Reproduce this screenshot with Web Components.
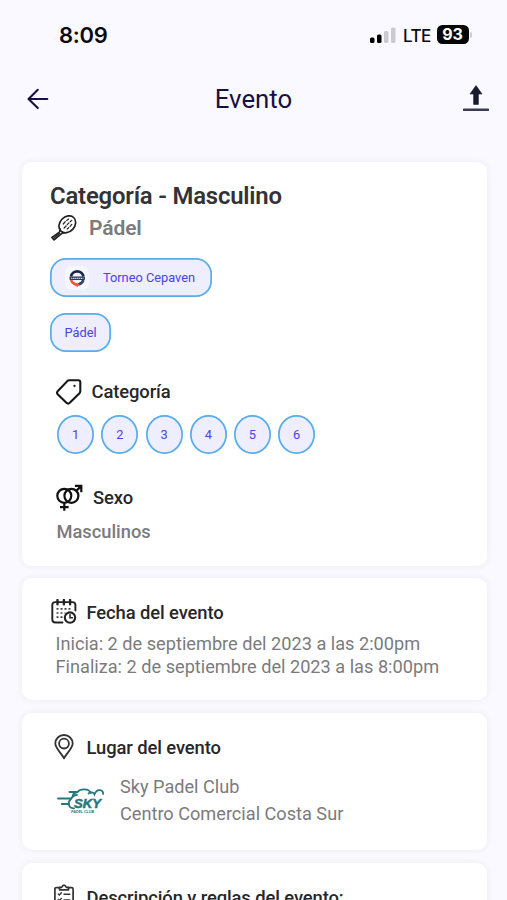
<!DOCTYPE html>
<html lang="es">
<head>
<meta charset="utf-8">
<title>Evento</title>
<style>
html,body{margin:0;height:900px;overflow:hidden;background:#faf9ff}
</style>
</head>
<body>
<event-page></event-page>
<script>
const define = (name, css, html) => customElements.define(name, class extends HTMLElement {
  constructor() {
    super();
    this.attachShadow({mode: 'open'}).innerHTML = `<style>*{box-sizing:border-box}svg{display:block}${css}</style>${typeof html === 'function' ? html(this) : html}`;
  }
});

const icons = {
  back: `<svg width="22" height="22" viewBox="0 0 22 22" fill="none" stroke="#171044" stroke-width="2.1" stroke-linecap="round" stroke-linejoin="round"><path d="M20.3 11H1.6M10.8 1.8 1.5 11l9.3 9.1"/></svg>`,
  upload: `<svg width="26" height="27" viewBox="0 0 26 27"><path d="M13 .5 19 9h-3.6v10.4h-4.8V9H7z" fill="#191b2b" stroke="#191b2b" stroke-width=".6" stroke-linejoin="round"/><path d="M.8 24.8h24.4" stroke="#393c50" stroke-width="2.4" stroke-linecap="round"/></svg>`,
  signal: `<svg width="26" height="17" viewBox="0 0 26 17"><rect x="0" y="10.500" width="4.500" height="5.500" rx="1.500"/><rect x="7" y="7.500" width="4.500" height="8.500" rx="1.500"/><rect x="14" y="4" width="4.500" height="12" rx="1.500" fill="#cbcad0"/><rect x="21" y=".5" width="4.500" height="15.500" rx="1.500" fill="#cbcad0"/></svg>`,
  racket: `<svg width="26" height="26" viewBox="0 0 26 26" fill="none" stroke="#222" stroke-linecap="round" stroke-linejoin="round"><ellipse cx="16.300" cy="9.300" rx="7.400" ry="9.300" transform="rotate(43 16.300 9.300)" stroke-width="1.700"/><path d="M9.300 14 8.400 17.200.9 22.400l2.200 2.500 7.500-6.300 2.700-.9" stroke-width="1.600"/><path d="m3 22.800 5.400-4.300" stroke-width="1.500"/><path d="m12.300 9 1.900-2.300M15.700 5.500l1.800-1.300M13.100 13l2-2M16.200 9.600 18 7.800M19.200 6.700l1.500-1.300M16.200 14l1.500-1.400M19.100 11.300l1.700-1.900" stroke-width="1.200"/></svg>`,
  tag: `<svg width="26" height="26" viewBox="0 0 26 26" fill="none" stroke="#171717" stroke-width="2.100" stroke-linejoin="round"><path d="M13.200 1.300 22.300 1.300q2 0 2 2v8.800q0 1.200-.8 2.100L14 23.600q-1.800 1.900-3.600.2L1.900 15.500q-1.700-1.800 0-3.500l9.400-9.900q.8-.8 1.900-.8z"/><circle cx="18.500" cy="6.900" r=".8" fill="#171717" stroke-width=".8"/></svg>`,
  sex: `<svg width="28" height="28" viewBox="0 0 28 28" fill="none" stroke="#111" stroke-width="2.200"><circle cx="8.300" cy="11.800" r="7"/><circle cx="15.400" cy="11.800" r="7"/><path d="M20.300 6.900 25.300 1.900M18.900 1.900h6.400V8.300M8.300 18.800v8M4 23.200h8.600"/></svg>`,
  calendar: `<svg width="26" height="26" viewBox="0 0 26 26" fill="none" stroke="#222" stroke-width="1.900" stroke-linecap="round"><path d="M11.500 23.500H4.300q-3 0-3-3V6q0-2.900 3-2.900h17.200q2.900 0 2.900 2.900v5.500"/><path d="M6.500 1v4.200M12.900 1v4.200M19.100 1v4.200" stroke-width="2.400"/><path d="M5.500 9.800h15M5.500 14h9M5.500 18.200h7" stroke="#444" stroke-width="1.700" stroke-linecap="butt" stroke-dasharray="2 2"/><circle cx="19" cy="18.600" r="5.200" stroke-width="2.100"/><path d="M19 15.600v3.200h2.400" stroke-width="1.500"/></svg>`,
  pin: `<svg width="20" height="26" viewBox="0 0 20 26" fill="none" stroke="#333" stroke-width="1.800" stroke-linejoin="round"><path d="M10 24.300C8.600 20.800 1.300 14.300 1.300 9.500a8.700 8.500 0 0 1 17.400 0C18.700 14.300 11.400 20.800 10 24.300z"/><circle cx="10" cy="9.600" r="4.900"/></svg>`,
  clipboard: `<svg width="20" height="26" viewBox="0 0 20 26" fill="none" stroke="#333" stroke-width="1.700" stroke-linecap="round" stroke-linejoin="round"><path d="M5.500 3.600H2.300Q.9 3.600.9 5v18q0 1.400 1.400 1.400h15.400q1.400 0 1.400-1.400V5q0-1.400-1.400-1.400h-3.200"/><path d="M5.500 5.800V3.300H7.600Q10-1.200 12.400 3.300h2.100V5.800z"/><path d="m4.300 9.900 1.100 1.100 2-2.200M10 10.300h5.800M4.300 15.500l1.100 1.100 2-2.200M10 16h5.800M4.300 21l1.100 1.100 2-2.200M10 21.500h5.800" stroke-width="1.400"/></svg>`,
  cepaven: `<svg width="24" height="24" viewBox="0 0 24 24"><rect width="24" height="24" rx="7" fill="#f7f6fa"/><path d="M6 10.500a6.300 6.300 0 0 1 12.400 0" fill="none" stroke="#18274f" stroke-width="2.700"/><path d="M6 14C7 16.800 10 18.300 12 19" fill="none" stroke="#ed583f" stroke-width="2.500"/><path d="M18.400 14C17.600 16.500 15.500 18 13 18.500" fill="none" stroke="#2d3f70" stroke-width="2.500"/><path d="m8.800 16.600 3.600 4.600 2.200-3.200z" fill="#ed583f"/><rect x="4.500" y="10.600" width="15.500" height="3.400" rx="1" fill="#26365d"/><path d="M6 12.300h12.500" stroke="#c5cad8" stroke-width="1.200" stroke-dasharray="1.500 .5"/></svg>`
};
const sky = `<svg width="48" height="28" viewBox="0 0 48 28" fill="none" stroke="#26777c" stroke-linecap="round"><path d="M12.500 4H20.500C23 .5 32 .3 33.800 5M20.500 4C18 4.300 16.500 5.300 15.700 7.500M31.500 5.500C34 3.500 36.500 4.300 37.500 6.500 40-.3 47 2 46 6" stroke-width="1.800"/><path d="M1 10.500H14.200Q16.300 7.100 20 6.900M4.800 16H11.800Q12 20.100 17 20.300" stroke-width="1.800"/><path d="M14.200 10.500Q11.600 12.900 11.800 16" stroke-width="1.800"/><text x="17" y="20" font-family="Liberation Sans" font-weight="700" font-style="italic" font-size="12.500" textLength="27" lengthAdjust="spacingAndGlyphs" fill="#26777c" stroke="#26777c" stroke-width=".5">SKY</text><text x="14" y="25" font-family="Liberation Sans" font-weight="700" font-style="italic" font-size="3.600" textLength="23" lengthAdjust="spacingAndGlyphs" fill="#26777c" stroke="none">PADEL CLUB</text></svg>`;

define('ui-icon', ':host{display:block;flex:none}', el => icons[el.getAttribute('name')]);
define('sky-logo', ':host{display:block;flex:none}', sky);

define('status-bar', `
  :host{display:flex;height:70px;padding:0 35px 0 59px;align-items:center;color:#0b0b0d;font-family:Inter,sans-serif}
  .time{font-size:22px;font-weight:600;letter-spacing:-.25px;flex:1;margin-top:-1px}
  .lte{width:27px;font-size:17px;font-weight:500;margin:1px 6.500px 0 7.500px;letter-spacing:-.5px;white-space:nowrap}
  .bat{width:32px;height:19px;margin-top:-1px;border-radius:5.500px;background:#060606;color:#fff;font-size:16px;line-height:19px;font-weight:700;text-align:center}
  .nub{width:2px;height:6px;border-radius:0 3px 3px 0;background:#cbcad0;margin:0 0 0 1.500px}`,
  `<span class="time">8:09</span><ui-icon name="signal"></ui-icon><span class="lte">LTE</span><span class="bat">93</span><span class="nub"></span>`);

define('nav-bar', `
  :host{display:flex;justify-content:space-between;align-items:center;height:58px;padding:0 18px 0 27px;color:#171044;font:400 25.800px/30px Roboto,sans-serif}
  ui-icon{margin-top:-1px}
  .t{margin:0 5px 0 0}`,
  `<ui-icon name="back"></ui-icon><span class="t">Evento</span><ui-icon name="upload"></ui-icon>`);

define('info-card', `
  :host{display:block;background:#fff;border-radius:10px;box-shadow:0 0 7px rgba(60,60,50,.07)}`, `<slot></slot>`);

define('icon-heading', `
  :host{display:flex;align-items:center;height:26px;font:500 18.400px/26px Roboto,sans-serif;letter-spacing:-.1px;color:#27272a}
  .t{padding-top:var(--drop,1px)}`,
  `<slot name="icon"></slot><span class="t"><slot></slot></span>`);

define('ui-chip', `
  :host{display:flex;align-items:center;justify-content:center;width:var(--w);height:39px;box-shadow:inset 0 0 0 1.700px #55adea;border-radius:var(--r,16px);background:#eeeefe;color:#4a43e4;font:400 12.800px/18px Roboto,sans-serif;box-sizing:border-box}
  div{display:flex;align-items:center;padding-top:1px}`,
  `<div><slot></slot></div>`);

define('event-page', `
  :host{display:block;width:507px;height:900px;overflow:hidden;font-family:Roboto,sans-serif;color:#7b7b7d}
  main{display:flex;flex-direction:column;gap:13px;padding:33.500px 20.500px 0 22px}
  .c1{height:404.500px;padding:18.500px 28px 0;margin-bottom:-1px}
  .c2{height:122px;padding:21px 29px 0}
  .c3{height:137px;padding:21px 29px 0}
  .c4{height:137px;padding:21px 29px 0}
  h1{margin:0;font:600 23.900px/32px Roboto,sans-serif;letter-spacing:-.2px;color:#333336}
  .sport{display:flex;align-items:center;height:32px;font-size:21px;font-weight:600;gap:12px;padding-left:1px;letter-spacing:-.1px}
  .wide{margin-top:14px}.small{margin-top:15.500px}
  .cat{margin:27.500px 0 0 5.500px;--drop:0px}
  .nums{display:flex;gap:7.200px;margin:10px 0 0 7.200px}
  .sex{margin:31px 0 0 6px;--drop:0px}
  .m{font-size:18.300px;font-weight:500;line-height:24px;margin:9px 0 0 6.500px}
  .date{margin:6.500px 0 0 4.500px;font-size:18.180px;line-height:23.500px}
  .place{display:flex;align-items:center;gap:15px;margin:12.500px 0 0 6px;font-size:18.150px;line-height:27px}
  sky-logo{margin-top:4px}`,
  `<status-bar></status-bar><nav-bar></nav-bar>
  <main>
    <info-card class="c1">
      <h1>Categoría - Masculino</h1>
      <div class="sport"><ui-icon name="racket"></ui-icon><span>Pádel</span></div>
      <ui-chip class="wide" style="--w:162px"><ui-icon name="cepaven" style="margin:0 14px 0 -2px"></ui-icon><span>Torneo Cepaven</span></ui-chip>
      <ui-chip class="small" style="--w:61px">Pádel</ui-chip>
      <icon-heading class="cat"><ui-icon slot="icon" name="tag" style="margin-right:10px"></ui-icon>Categoría</icon-heading>
      <div class="nums">${[1,2,3,4,5,6].map(n => `<ui-chip style="--w:37px;--r:50%">${n}</ui-chip>`).join('')}</div>
      <icon-heading class="sex"><ui-icon slot="icon" name="sex" style="margin-right:9px"></ui-icon>Sexo</icon-heading>
      <div class="m">Masculinos</div>
    </info-card>
    <info-card class="c2">
      <icon-heading><ui-icon slot="icon" name="calendar" style="margin-right:9.500px"></ui-icon>Fecha del evento</icon-heading>
      <div class="date"><div>Inicia: 2 de septiembre del 2023 a las 2:00pm</div><div>Finaliza: 2 de septiembre del 2023 a las 8:00pm</div></div>
    </info-card>
    <info-card class="c3">
      <icon-heading><ui-icon slot="icon" name="pin" style="margin:0 13px 0 2.500px"></ui-icon>Lugar del evento</icon-heading>
      <div class="place"><sky-logo></sky-logo><div><div>Sky Padel Club</div><div>Centro Comercial Costa Sur</div></div></div>
    </info-card>
    <info-card class="c4">
      <icon-heading><ui-icon slot="icon" name="clipboard" style="margin:0 13px 0 2.500px"></ui-icon>Descripción y reglas del evento:</icon-heading>
    </info-card>
  </main>`);
</script>
</body>
</html>
